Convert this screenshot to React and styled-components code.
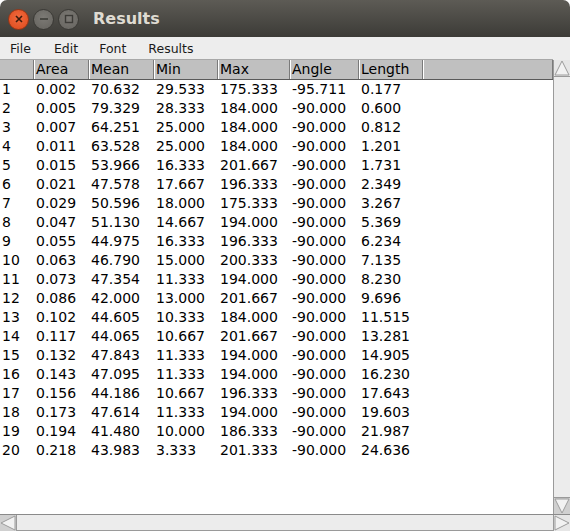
import React from 'react';
import styled, { createGlobalStyle } from 'styled-components';

const GlobalStyle = createGlobalStyle`
  html, body {
    margin: 0;
    padding: 0;
    background: #ffffff;
  }
`;

const rows = [
  ['1', '0.002', '70.632', '29.533', '175.333', '-95.711', '0.177'],
  ['2', '0.005', '79.329', '28.333', '184.000', '-90.000', '0.600'],
  ['3', '0.007', '64.251', '25.000', '184.000', '-90.000', '0.812'],
  ['4', '0.011', '63.528', '25.000', '184.000', '-90.000', '1.201'],
  ['5', '0.015', '53.966', '16.333', '201.667', '-90.000', '1.731'],
  ['6', '0.021', '47.578', '17.667', '196.333', '-90.000', '2.349'],
  ['7', '0.029', '50.596', '18.000', '175.333', '-90.000', '3.267'],
  ['8', '0.047', '51.130', '14.667', '194.000', '-90.000', '5.369'],
  ['9', '0.055', '44.975', '16.333', '196.333', '-90.000', '6.234'],
  ['10', '0.063', '46.790', '15.000', '200.333', '-90.000', '7.135'],
  ['11', '0.073', '47.354', '11.333', '194.000', '-90.000', '8.230'],
  ['12', '0.086', '42.000', '13.000', '201.667', '-90.000', '9.696'],
  ['13', '0.102', '44.605', '10.333', '184.000', '-90.000', '11.515'],
  ['14', '0.117', '44.065', '10.667', '201.667', '-90.000', '13.281'],
  ['15', '0.132', '47.843', '11.333', '194.000', '-90.000', '14.905'],
  ['16', '0.143', '47.095', '11.333', '194.000', '-90.000', '16.230'],
  ['17', '0.156', '44.186', '10.667', '196.333', '-90.000', '17.643'],
  ['18', '0.173', '47.614', '11.333', '194.000', '-90.000', '19.603'],
  ['19', '0.194', '41.480', '10.000', '186.333', '-90.000', '21.987'],
  ['20', '0.218', '43.983', '3.333', '201.333', '-90.000', '24.636'],
];

const headers = ['', 'Area', 'Mean', 'Min', 'Max', 'Angle', 'Length'];
const widths = [34, 55, 65, 64, 72, 69, 64];

const Window = styled.div`
  width: 570px;
  height: 531px;
  display: flex;
  flex-direction: column;
  background: #ffffff;
  overflow: hidden;
  font-family: "DejaVu Sans", sans-serif;
`;

const TitleBar = styled.div`
  height: 37px;
  flex: none;
  display: flex;
  align-items: center;
  padding-left: 8px;
  gap: 4px;
  background: linear-gradient(#5d5b55, #3c3b37);
  border-radius: 7px 7px 0 0;
`;

const Circle = styled.div`
  width: 21px;
  height: 21px;
  border-radius: 50%;
  box-sizing: border-box;
  display: flex;
  align-items: center;
  justify-content: center;
  background: ${p => (p.$close ? 'radial-gradient(circle at 50% 40%, #f26a3e, #dd4a1c)' : 'radial-gradient(circle at 50% 40%, #7c7a75, #65635e)')};
  border: 1px solid ${p => (p.$close ? '#9b3514' : '#3a3935')};
  margin-top: 1px;
`;

const Title = styled.div`
  margin-left: 10px;
  font-size: 16px;
  font-weight: bold;
  color: #dfdbd2;
`;

const MenuBar = styled.div`
  height: 23px;
  flex: none;
  display: flex;
  align-items: center;
  background: #ededed;
  font-size: 12.5px;
  color: #1a1a1a;
`;

const MenuItem = styled.div`
  padding-left: ${p => p.$left}px;
`;

const Middle = styled.div`
  flex: 1;
  display: flex;
  min-height: 0;
`;

const TableArea = styled.div`
  flex: 1;
  display: flex;
  flex-direction: column;
  background: #ffffff;
`;

const HeaderRow = styled.div`
  height: 19px;
  display: flex;
  background: #c0c0c0;
  border-bottom: 1px solid #5a5a5a;
  border-top: 1px solid #a8a8a8;
  box-sizing: content-box;
  margin-top: -1px;
`;

const HeaderCell = styled.div`
  width: ${p => p.$w}px;
  flex: ${p => (p.$grow ? 1 : 'none')};
  box-sizing: border-box;
  border-left: ${p => (p.$first ? 'none' : '1px solid #ffffff')};
  border-right: 1px solid #7a7a7a;
  padding-left: 1px;
  font-size: 14px;
  line-height: 19px;
  color: #000000;
  white-space: nowrap;
`;

const Row = styled.div`
  height: 19px;
  display: flex;
`;

const Cell = styled.div`
  width: ${p => p.$w}px;
  flex: none;
  box-sizing: border-box;
  padding-left: 2px;
  font-size: 14px;
  line-height: 19px;
  color: #000000;
  white-space: nowrap;
`;

const VScroll = styled.div`
  width: 17px;
  flex: none;
  display: flex;
  flex-direction: column;
  background: #ececec;
  border-left: 1px solid #9a9a9a;
  box-sizing: border-box;
`;

const Track = styled.div`
  flex: 1;
  background: #ececec;
  border-top: 1px solid #9a9a9a;
  border-bottom: 1px solid #9a9a9a;
`;

const HScroll = styled.div`
  height: 17px;
  flex: none;
  display: flex;
  background: #ececec;
  border-top: 1px solid #8a8a8a;
  box-sizing: border-box;
`;

const HTrack = styled.div`
  flex: 1;
  border-left: 1px solid #9a9a9a;
  border-right: 1px solid #9a9a9a;
  border-bottom: 1px solid #9a9a9a;
`;

const ArrowBox = styled.div`
  width: 16px;
  height: 16px;
  flex: none;
  background: ${p => (p.$dark ? '#d0d0d0' : '#e6e6e6')};
  display: flex;
`;

const Arrow = ({ dir, dark }) => {
  const pts = {
    up: '8,1 1,15 15,15',
    down: '1,1 15,1 8,15',
    left: '15,1 15,15 1,8',
    right: '1,1 1,15 15,8',
  }[dir];
  return (
    <ArrowBox $dark={dark}>
      <svg width="16" height="16" viewBox="0 0 16 16">
        <polygon points={pts} fill="#f2f2f2" stroke="#9c9c9c" strokeWidth="1" />
      </svg>
    </ArrowBox>
  );
};

export default function App() {
  return (
    <>
      <GlobalStyle />
      <Window>
        <TitleBar>
          <Circle $close>
            <svg width="8" height="8" viewBox="0 0 8 8">
              <path d="M1 1 L7 7 M7 1 L1 7" stroke="#3b1a0c" strokeWidth="1.6" />
            </svg>
          </Circle>
          <Circle>
            <svg width="10" height="10" viewBox="0 0 10 10">
              <path d="M1 5 H9" stroke="#3c3b37" strokeWidth="1.6" />
            </svg>
          </Circle>
          <Circle>
            <svg width="10" height="10" viewBox="0 0 10 10">
              <rect x="1.5" y="1.5" width="7" height="7" fill="none" stroke="#3c3b37" strokeWidth="1.4" />
            </svg>
          </Circle>
          <Title>Results</Title>
        </TitleBar>
        <MenuBar>
          <MenuItem $left={10}>File</MenuItem>
          <MenuItem $left={23}>Edit</MenuItem>
          <MenuItem $left={21}>Font</MenuItem>
          <MenuItem $left={22}>Results</MenuItem>
        </MenuBar>
        <Middle>
          <TableArea>
            <HeaderRow>
              {headers.map((h, i) => (
                <HeaderCell key={i} $w={widths[i]} $first={i === 0}>{h}</HeaderCell>
              ))}
              <HeaderCell $grow $w={0} />
            </HeaderRow>
            {rows.map((r, i) => (
              <Row key={i}>
                {r.map((v, j) => (
                  <Cell key={j} $w={widths[j]}>{v}</Cell>
                ))}
              </Row>
            ))}
          </TableArea>
          <VScroll>
            <Arrow dir="up" />
            <Track />
            <Arrow dir="down" dark />
          </VScroll>
        </Middle>
        <HScroll>
          <Arrow dir="left" dark />
          <HTrack />
          <Arrow dir="right" />
        </HScroll>
      </Window>
    </>
  );
}
